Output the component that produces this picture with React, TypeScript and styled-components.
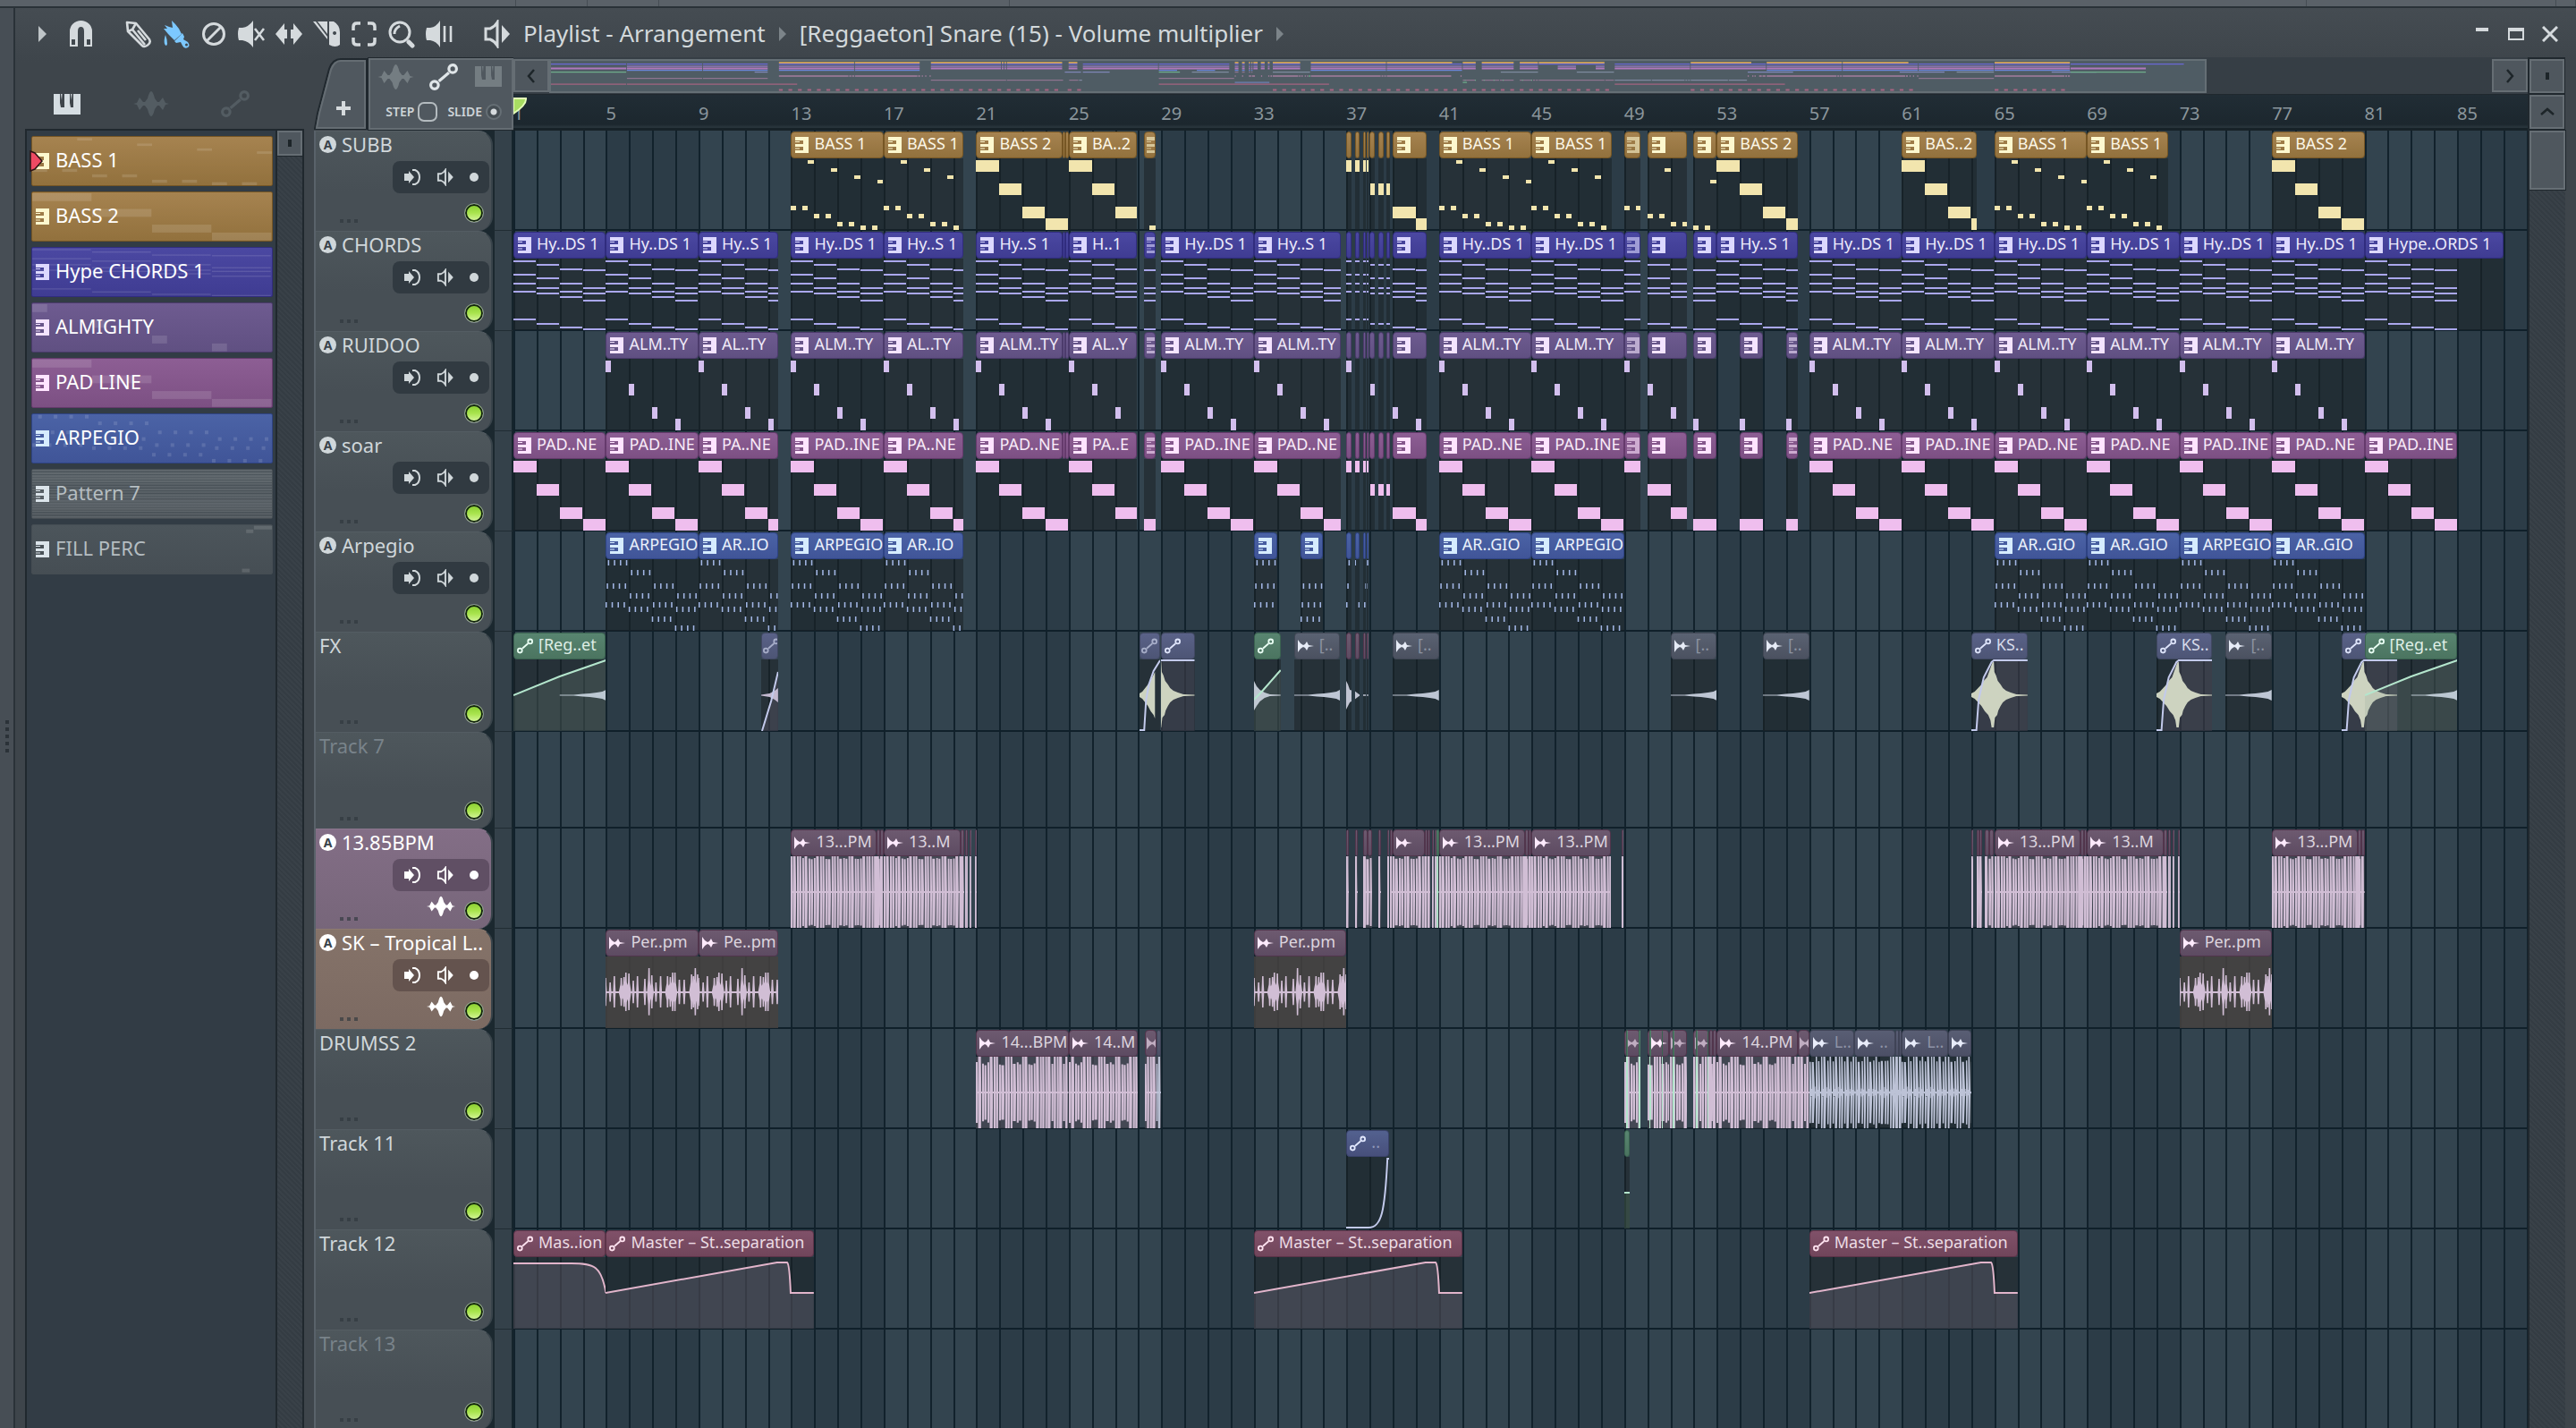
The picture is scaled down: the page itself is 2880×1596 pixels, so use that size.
import React from "react";
import styled, { createGlobalStyle } from "styled-components";

/* ---------- timeline scale ---------- */

const TOTAL_BARS = 87.05;
const pct = (bars: number) => `${(bars / TOTAL_BARS) * 100}%`;

const Global = createGlobalStyle`
  *, *::before, *::after { box-sizing: border-box; }
  html, body { margin: 0; height: 100%; background: #40474d; }
  body { font-family: "Noto Sans", "Open Sans", sans-serif; color: #d3d9dc; overflow: hidden; }
  button { font: inherit; color: inherit; border: 0; padding: 0; margin: 0; background: none; cursor: pointer; }
  input { margin: 0; }
  svg { display: block; }
`;

/* ---------- colours ---------- */

type Tone = { a: string; b: string; edge: string; ink: string; icon: string; note: string };

const tones: Record<string, Tone> = {
  bass: { a: "#a68350", b: "#92713d", edge: "#765624", ink: "#fbf6e6", icon: "#fdf8cf", note: "#f2e5ae" },
  chords: { a: "#4b48a2", b: "#3f3c92", edge: "#302c7e", ink: "#eceafb", icon: "#dcd8ff", note: "#aaa7ec" },
  almighty: { a: "#6e5b90", b: "#605082", edge: "#4c3b6c", ink: "#f0eaf8", icon: "#f4e4ff", note: "#d3bfee" },
  pad: { a: "#8d5e94", b: "#7c5083", edge: "#653a6c", ink: "#f8ebf8", icon: "#ffe4ff", note: "#efbeee" },
  arp: { a: "#4b63a6", b: "#405598", edge: "#2e4384", ink: "#eaf1fb", icon: "#d6ecff", note: "#a2b6e4" },
  green: { a: "#588570", b: "#4b7460", edge: "#3a6350", ink: "#dfeee6", icon: "#eafff4", note: "#b4e6cd" },
  slate: { a: "#5a6288", b: "#4d5575", edge: "#414862", ink: "#d6daea", icon: "#dfe5fb", note: "#c3caec" },
  grey: { a: "#5a6272", b: "#4b5160", edge: "#414755", ink: "#8b92a0", icon: "#e6ebf6", note: "#bec6d4" },
  mauve: { a: "#6d5a70", b: "#5d4b62", edge: "#51354c", ink: "#ddd5df", icon: "#fdeafc", note: "#d1bed5" },
  steel: { a: "#595e74", b: "#4c5066", edge: "#3f4356", ink: "#8e93a6", icon: "#e8ecfa", note: "#bcc2d6" },
  indigo: { a: "#53618f", b: "#474f7b", edge: "#3a4269", ink: "#8e96b8", icon: "#e3e9ff", note: "#c3caec" },
  wine: { a: "#805169", b: "#71455b", edge: "#5c3348", ink: "#ecdce4", icon: "#ffe3f0", note: "#e2b5cb" },
  plain: { a: "#4c555b", b: "#464e54", edge: "#454d53", ink: "#b7bfc3", icon: "#dbe4ea", note: "#ffffff" },
};

/* ---------- note and wave shapes (100 units a bar, 80 units high) ---------- */

type Box = [number, number, number, number];
const steps = [1.5, 27.5, 53.5, 66.5];

const bass1: Box[] = [
  [75, 2, 25, 4], [175, 11, 25, 4], [275, 19, 25, 4], [375, 24, 25, 4],
  [0, 53, 25, 5], [50, 53, 25, 5], [100, 62, 25, 5], [150, 62, 25, 5],
  [200, 71, 25, 5], [250, 71, 25, 5], [300, 75, 25, 5], [350, 75, 25, 5],
];
const wide: Box[] = steps.map((y, i) => [i * 100, y, 99, 13]);
const slim: Box[] = steps.map((y, i) => [i * 100, y, 25, 13]);
const chordRows = [
  [2, 17, 27, 36, 67],
  [6, 21, 32, 38, 72],
  [11, 27, 36, 42, 76],
  [12, 32, 38, 46, 78],
];
const chords: Box[] = chordRows.flatMap((ys, i) => ys.map((y): Box => [i * 100, y, 98, 2]));
const arpRows = [
  [1, 27, 48],
  [12, 38, 53],
  [27, 48, 64],
  [38, 53, 74],
];
const arp: Box[] = arpRows.flatMap((ys, i) =>
  ys.flatMap((y, k) => [0, 1, 2, 3].map((n): Box => [i * 100 + n * 26 + (2 - k) * 5, y, 6, 6]))
);

const noteSets: Record<string, Box[]> = { bass1, wide, slim, chords, arp };

const rnd = (n: number) => {
  const v = Math.sin(n * 127.1 + 3.7) * 43758.5453;
  return v - Math.floor(v);
};

const beatPath = (seed: number, ragged: number, weight: number) => {
  const hits: [number, number][] = [[0, 9], [10, 14], [27, 9], [37, 10]];
  let d = "M0 39H400V41H0Z";
  for (let h = 0; h < 8; h += 1) {
    hits.forEach(([x, w], k) => {
      const r = rnd(seed + h * 5 + k);
      const top = r > 0.6 ? ragged * r * 8 : 0;
      const left = h * 50 + x;
      d += `M${left} ${top}H${left + w * weight}L${left + w} 40L${left + w * (weight + 0.05)} ${80 - top}H${left}Z`;
    });
  }
  return d;
};
const loopPath = beatPath(4, 0.4, 0.8);
const drumPath = beatPath(9, 1.2, 0.85);
const steelPath = `${beatPath(31, 0.8, 0.6)}${Array.from({ length: 16 }, (_, i) => {
  const x = i * 25;
  const a = 3 + rnd(i + 60) * 4;
  return `M${x} ${40 - a}L${x + 14} 37L${x + 25} 39V41L${x + 14} 43L${x} ${40 + a}Z`;
}).join("")}`;

const percPeaks: [number, number, number][] = [
  [0, 16, 6], [20, 11, 6], [38, 18, 6], [68, 16, 11], [80, 17, 14], [88, 22, 15], [101, 21, 10], [120, 13, 6], [138, 18, 6],
  [170, 15, 6], [188, 27, 9], [200, 19, 9], [218, 11, 6], [238, 18, 6], [268, 18, 11], [280, 17, 15], [290, 22, 15],
  [300, 22, 10], [319, 14, 6], [340, 14, 6], [372, 20, 11], [380, 18, 11], [388, 27, 10], [398, 20, 8],
];
const percPath =
  "M0 39H400V41H0Z" +
  percPeaks
    .map(([x, a, w]) => `M${x - w} 40L${x - 4} ${40 - a * 0.55}L${x - 3} ${40 - a}H${x + 3}L${x + 4} ${40 - a * 0.5}L${x + w} 40L${x + 4} ${40 + a * 0.5}L${x + 3} ${40 + a * 0.95}H${x - 3}L${x - 4} ${40 + a * 0.5}Z`)
    .join("");

const swellPath =
  "M0 38L6 36L12 32L18 28L22 24L28 20L32 13L36 6L38 3H40L41 14L44 18L47 24L52 28L56 32L62 35L70 37L80 39L100 39.5V40.5L80 41L70 43L62 45L56 48L52 52L48 57L46 62L42 65L40 76H36L34 68L30 62L24 58L18 52L12 48L6 44L0 42Z";

/* ---------- clip data ---------- */

type Shape = "bass1" | "wide" | "slim" | "chords" | "arp" | "loop" | "drum" | "steel" | "perc"
  | "rise" | "riseOver" | "swell" | "swellA" | "swellB" | "tail" | "hit" | "hitLine" | "ramp" | "fall" | "sweep" | "expo" | "dash";

type Clip = { s: number; e: number; tone: string; shape: Shape; label?: string; off?: number };
const clip = (tone: string, shape: Shape) => (s: number, e: number, label?: string, off?: number): Clip => ({ s, e, tone, shape, label, off });

const stutter: [number, number][] = [
  [37, 37.23], [37.38, 37.56], [37.74, 37.85], [37.87, 37.97], [37.98, 38.24], [38.37, 38.61], [38.74, 38.87],
];
const slivers = (mk: ReturnType<typeof clip>, list: [number, number][]) => list.map(([s, e]) => mk(s, e));
const pair = (s: number, e: number): [number, number][] => [[s, (s + e) / 2], [(s + e) / 2, e]];

const b1 = clip("bass", "bass1");
const b2 = clip("bass", "wide");
const ch = clip("chords", "chords");
const al = clip("almighty", "slim");
const pd = clip("pad", "wide");
const ar = clip("arp", "arp");
const lp = clip("mauve", "loop");
const pc = clip("mauve", "perc");
const dr = clip("mauve", "drum");
const st = clip("steel", "steel");
const tl = clip("grey", "tail");
const mst = clip("wine", "ramp");

type TrackInfo = {
  name: string;
  grouped?: boolean;
  wave?: boolean;
  dim?: boolean;
  skin?: "mauve" | "brown";
  short?: boolean;
  clips: Clip[];
};

const tracks: TrackInfo[] = [
  {
    name: "SUBB", grouped: true,
    clips: [
      b1(13, 17, "BASS 1"), b1(17, 20.45, "BASS 1"), b2(21, 24.73, "BASS 2"), ...slivers(b2, pair(24.73, 25)),
      b2(25, 27.95, "BA..2"), b1(28.25, 28.75), ...slivers(b2, stutter), b2(39, 40.48),
      b1(41, 45, "BASS 1"), b1(45, 48.48, "BASS 1"), b1(49, 49.72), b1(50, 51.72), b1(52, 53),
      b2(53, 56.5, "BASS 2"), b2(61, 64.23, "BAS..2"), b1(65, 69, "BASS 1"), b1(69, 72.5, "BASS 1"), b2(77, 81, "BASS 2"),
    ],
  },
  {
    name: "CHORDS", grouped: true,
    clips: [
      ch(1, 5, "Hy..DS 1"), ch(5, 9, "Hy..DS 1"), ch(9, 12.45, "Hy..S 1"), ch(13, 17, "Hy..DS 1"), ch(17, 20.45, "Hy..S 1"),
      ch(21, 24.73, "Hy..S 1"), ...slivers(ch, pair(24.73, 25)), ch(25, 27.95, "H..1"), ch(28.25, 28.75),
      ch(29, 33, "Hy..DS 1"), ch(33, 36.75, "Hy..S 1"), ...slivers(ch, stutter), ch(39, 40.48),
      ch(41, 45, "Hy..DS 1"), ch(45, 49, "Hy..DS 1"), ch(49, 49.72), ch(50, 51.72), ch(52, 53), ch(53, 56.5, "Hy..S 1"),
      ch(57, 61, "Hy..DS 1"), ch(61, 65, "Hy..DS 1"), ch(65, 69, "Hy..DS 1"), ch(69, 73, "Hy..DS 1"),
      ch(73, 77, "Hy..DS 1"), ch(77, 81, "Hy..DS 1"), ch(81, 87, "Hype..ORDS 1"),
    ],
  },
  {
    name: "RUIDOO", grouped: true,
    clips: [
      al(5, 9, "ALM..TY"), al(9, 12.45, "AL..TY"), al(13, 17, "ALM..TY"), al(17, 20.45, "AL..TY"),
      al(21, 24.73, "ALM..TY"), ...slivers(al, pair(24.73, 25)), al(25, 27.95, "AL..Y"), al(28.25, 28.75),
      al(29, 33, "ALM..TY"), al(33, 36.75, "ALM..TY"), ...slivers(al, stutter), al(39, 40.48),
      al(41, 45, "ALM..TY"), al(45, 49, "ALM..TY"), al(49, 49.72), al(50, 51.72), al(52, 53), al(54, 55, undefined, 3), al(56, 56.5),
      al(57, 61, "ALM..TY"), al(61, 65, "ALM..TY"), al(65, 69, "ALM..TY"), al(69, 73, "ALM..TY"), al(73, 77, "ALM..TY"), al(77, 81, "ALM..TY"),
    ],
  },
  {
    name: "soar", grouped: true,
    clips: [
      pd(1, 5, "PAD..NE"), pd(5, 9, "PAD..INE"), pd(9, 12.45, "PA..NE"), pd(13, 17, "PAD..INE"), pd(17, 20.45, "PA..NE"),
      pd(21, 24.73, "PAD..NE"), ...slivers(pd, pair(24.73, 25)), pd(25, 27.95, "PA..E"), pd(28.25, 28.75),
      pd(29, 33, "PAD..INE"), pd(33, 36.75, "PAD..NE"), ...slivers(pd, stutter), pd(39, 40.48),
      pd(41, 45, "PAD..NE"), pd(45, 49, "PAD..INE"), pd(49, 49.72), pd(50, 51.72), pd(52, 53), pd(54, 55, undefined, 3), pd(56, 56.5),
      pd(57, 61, "PAD..NE"), pd(61, 65, "PAD..INE"), pd(65, 69, "PAD..NE"), pd(69, 73, "PAD..NE"),
      pd(73, 77, "PAD..INE"), pd(77, 81, "PAD..NE"), pd(81, 85, "PAD..INE"),
    ],
  },
  {
    name: "Arpegio", grouped: true,
    clips: [
      ar(5, 9, "ARPEGIO"), ar(9, 12.45, "AR..IO"), ar(13, 17, "ARPEGIO"), ar(17, 20.45, "AR..IO"),
      ar(33, 34), ar(35, 36), ...slivers(ar, stutter.slice(0, 4)),
      ar(41, 45, "AR..GIO"), ar(45, 49, "ARPEGIO"),
      ar(65, 69, "AR..GIO"), ar(69, 73, "AR..GIO"), ar(73, 77, "ARPEGIO"), ar(77, 81, "AR..GIO"),
    ],
  },
  {
    name: "FX",
    clips: [
      clip("green", "rise")(1, 5, "[Reg..et"), clip("slate", "sweep")(11.72, 12.45),
      clip("slate", "swellA")(28.05, 28.94), clip("slate", "swellB")(29, 30.45),
      clip("green", "hitLine")(33, 34.15), tl(34.74, 36.72, "[.."),
      ...slivers(clip("mauve", "hit"), stutter.slice(0, 4)),
      tl(39, 41, "[.."), tl(51, 53, "[.."), tl(55, 57, "[.."),
      clip("slate", "swell")(64, 66.43, "KS.."), clip("slate", "swell")(72, 74.4, "KS.."), tl(75, 77, "[.."),
      clip("slate", "swell")(80, 82.4), clip("green", "riseOver")(81, 85, "[Reg..et"),
    ],
  },
  { name: "Track 7", dim: true, short: true, clips: [] },
  {
    name: "13.85BPM", grouped: true, wave: true, skin: "mauve",
    clips: [
      lp(13, 16.7, "13...PM"), ...slivers(lp, pair(16.7, 17)), lp(17, 20.33, "13..M"),
      ...slivers(lp, [[20.33, 20.47], [20.52, 20.62], [20.7, 20.8], [20.93, 21.03]]),
      ...slivers(lp, [[37, 37.09], [37.38, 37.48], [37.74, 37.9], [37.9, 38.1], [38.38, 38.48], [38.76, 38.86], [38.88, 39]]),
      lp(39, 40.38), ...slivers(lp, [[40.38, 40.5], [40.5, 40.62], [40.68, 40.78]]), lp(40.8, 40.9), clip("green", "loop")(40.9, 41),
      lp(41, 44.72, "13...PM"), ...slivers(lp, pair(44.72, 45)), lp(45, 48.43, "13..PM"), lp(48.88, 48.98),
      ...slivers(lp, [[64, 64.1], [64.24, 64.34], [64.36, 64.46], [64.6, 64.78], [64.78, 64.98]]),
      lp(65, 68.72, "13...PM"), ...slivers(lp, pair(68.72, 69)), lp(69, 72.33, "13..M"),
      ...slivers(lp, [[72.33, 72.47], [72.52, 72.62], [72.7, 72.8], [72.92, 73.02]]),
      lp(77, 80.72, "13...PM"), ...slivers(lp, pair(80.72, 81)),
    ],
  },
  {
    name: "SK – Tropical L..", grouped: true, wave: true, skin: "brown",
    clips: [pc(5, 9, "Per..pm"), pc(9, 12.45, "Pe..pm"), pc(33, 37, "Per..pm"), pc(73, 77, "Per..pm")],
  },
  {
    name: "DRUMSS 2",
    clips: [
      dr(21, 25, "14...BPM"), dr(25, 28, "14..M"), dr(28.28, 28.8), clip("steel", "drum")(28.8, 29),
      dr(49, 49.72), dr(50, 50.96), dr(50.96, 51.72), dr(52, 52.7), ...slivers(dr, pair(52.7, 53)),
      ...slivers(clip("green", "drum"), [[49.1, 49.16], [49.64, 49.7], [50.1, 50.16], [50.62, 50.68], [51.1, 51.16], [52.12, 52.18], [52.6, 52.66]]),
      dr(53, 56.5, "14..PM"), dr(56.5, 57), st(57, 58.95, "L.."), st(58.95, 60.72, ".."), ...slivers(st, pair(60.72, 61)),
      st(61, 63, "L.."), st(63, 64),
    ],
  },
  { name: "Track 11", clips: [clip("indigo", "expo")(37, 38.86, ".."), clip("green", "dash")(49, 49.26)] },
  {
    name: "Track 12",
    clips: [
      clip("wine", "fall")(1, 5, "Mas..ion"), mst(5, 14, "Master – St..separation"),
      mst(33, 42, "Master – St..separation"), mst(57, 66, "Master – St..separation"),
    ],
  },
  { name: "Track 13", dim: true, clips: [] },
];

const patterns = [
  { name: "BASS 1", tone: "bass", notes: bass1, active: true },
  { name: "BASS 2", tone: "bass", notes: wide },
  { name: "Hype CHORDS 1", tone: "chords", notes: chords },
  { name: "ALMIGHTY", tone: "almighty", notes: slim },
  { name: "PAD LINE", tone: "pad", notes: wide },
  { name: "ARPEGIO", tone: "arp", notes: arp },
  { name: "Pattern 7", tone: "plain", notes: Array.from({ length: 18 }, (_, i): Box => [0, i * 4.5, 400, 2 + rnd(i) * 2]) },
  { name: "FILL PERC", tone: "plain", notes: [[370, 1, 30, 6], [357, 7, 12, 6], [350, 72, 13, 6]] as Box[] },
];

/* ---------- icons ---------- */

const PianoIcon = () => (
  <svg width="30" height="23" viewBox="0 0 30 23" fill="currentColor" aria-hidden="true">
    <path d="M0 0h7v10l1 5h4V0h6v10l1 5h3V0h8v23H0zM8 0h1.500l-.5 7zM19 0h1.500l-.5 7z" />
  </svg>
);
const WaveIcon = ({ w, h }: { w: number; h: number }) => (
  <svg width={w} height={h} viewBox="0 0 40 28" fill="currentColor" aria-hidden="true">
    <path d="M0 14l4-1 3-6 4 5 2 0 3-4q2-8 4-8t4 8l3 4 2 0 4-5 3 6 4 1-4 1-3 6-4-5-2 0-3 4q-2 8-4 8t-4-8l-3-4-2 0-4 5-3-6z" />
  </svg>
);
const AutoIcon = ({ size }: { size: number }) => (
  <svg width={size} height={size} viewBox="0 0 30 28" fill="none" stroke="currentColor" strokeWidth="3" aria-hidden="true">
    <circle cx="5.500" cy="22.500" r="4" />
    <circle cx="24.500" cy="5.500" r="4" />
    <path d="M10 18.500L20.500 9.500" />
  </svg>
);
const PatternIcon = () => (
  <svg width="16" height="18" viewBox="0 0 16 18" fill="currentColor" aria-hidden="true">
    <path d="M1 0h15v18H1v-3h9v-4H1V8h9V4H1zM1 5h5v1H1zM1 12.500h5v1H1z" />
  </svg>
);
const AudioIcon = () => (
  <svg width="18" height="14" viewBox="0 0 18 14" fill="currentColor" aria-hidden="true">
    <path d="M0 0l3 4 3 2 2-1 2-3 2 4 6 1-6 1-2 4-2-3-2-1-3 2-3 4z" />
  </svg>
);
const SpeakerIcon = ({ w, h }: { w: number; h: number }) => (
  <svg width={w} height={h} viewBox="0 0 30 32" aria-hidden="true">
    <path d="M2 10h5q5-2 8-7v26q-3-5-8-7H2z" fill="none" stroke="currentColor" strokeWidth="3" />
    <path d="M20 6l9 10-9 10z" fill="currentColor" />
  </svg>
);
const InputIcon = () => (
  <svg width="18" height="18" viewBox="0 0 18 18" aria-hidden="true">
    <path d="M0 5h5V2l6 7-6 7v-3H0z" fill="currentColor" />
    <path d="M9 1h3q5 2 5 8t-5 8H9" fill="none" stroke="currentColor" strokeWidth="2" />
  </svg>
);

const toolDrawings: Record<string, React.ReactNode> = {
  Menu: <path d="M10 7l9 9-9 9z" fill="currentColor" opacity=".85" />,
  Snap: (
    <path
      fillRule="evenodd"
      fill="currentColor"
      d="M3 30V13a12.500 12 0 0 1 25 0v17h-9V13q0-5-3.500-5T12 13v17zM5 22v6h4v-6zM22 22v6h4v-6z"
    />
  ),
  Draw: (
    <g fill="none" stroke="currentColor" strokeWidth="2.600" strokeLinejoin="round">
      <path d="M2 3l10 1 15 18q2 4-2 6.500-4 2.500-6 .5L3 13z" />
      <path d="M3 13l5-2 4-7M8 11l14 17M14 12l9 11" />
    </g>
  ),
  Paint: (
    <g>
      <path d="M10 1l4 4 4 5 3 6-8 7-7-7-5-6 4 0-3-4 5 2 4 1z" fill="#7cc8ff" />
      <path d="M22 15l2 4-1 3 5 3q3 4 0 6-4 2-6-2l-2-4-5 1-2-2z" fill="#7cc8ff" />
      <path d="M3 17q2 5 2 10-1 4-3 0Q1 23 3 17z" fill="#7cc8ff" />
      <circle cx="26.500" cy="28" r="1.500" fill="#40474d" />
    </g>
  ),
  Delete: (
    <g fill="none" stroke="currentColor" strokeWidth="3">
      <circle cx="15" cy="16" r="11.500" />
      <path d="M7 24L23 8" />
    </g>
  ),
  Mute: (
    <g>
      <path d="M1 9h4q7-1 12-8v30q-5-7-12-8H1q-2-7 0-14z" fill="currentColor" />
      <path d="M19 10l10 13M29 10L19 23" stroke="currentColor" strokeWidth="2.600" />
    </g>
  ),
  Slip: <path d="M0 16L10 4v7h3v10h-3v7zM30 16L20 4v7h-3v10h3v7z" fill="currentColor" />,
  Slice: (
    <g>
      <path d="M0 2h3l13 17v3zM5 2h11v14z" fill="currentColor" />
      <path fillRule="evenodd" d="M18 2h5q7 4 7 12v14q-5 4-12 0zM24 13a2 2 0 1 0 .1 0z" fill="currentColor" />
    </g>
  ),
  Select: (
    <path
      d="M3 12V8q0-4 4-4h4M19 4h4q4 0 4 4v4M27 20v4q0 4-4 4h-4M11 28H7q-4 0-4-4v-4"
      fill="none"
      stroke="currentColor"
      strokeWidth="3.500"
    />
  ),
  Zoom: (
    <g fill="none" stroke="currentColor">
      <circle cx="13" cy="14" r="11" strokeWidth="3" />
      <path d="M7 16q0-6 6-9" strokeWidth="3" />
      <path d="M23 25l4 4" strokeWidth="5" strokeLinecap="round" />
    </g>
  ),
  Playback: (
    <g>
      <path d="M1 9h4q7-1 11-8v30q-4-7-11-8H1q-2-7 0-14z" fill="currentColor" />
      <path d="M21 7v18M28 7v18" stroke="currentColor" strokeWidth="2.600" />
    </g>
  ),
};

/* ---------- shell ---------- */

const Shell = styled.div`
  display: flex;
  flex-direction: column;
  height: 100vh;
  overflow: hidden;
  background: #40474d;
`;
const TopStrip = styled.div`
  flex: none;
  display: grid;
  grid-template-columns: 577fr 80fr 80fr 392fr 1450fr 279fr 22fr;
  height: 9px;
  background: #5a6168;
  border-bottom: 2px solid #2a3238;
  & > i { border-right: 1px solid #454c53; }
`;
const Frame = styled.div`
  flex: 1;
  display: flex;
  min-height: 0;
`;
const LeftGrip = styled.div`
  flex: none;
  width: 17px;
  display: flex;
  flex-direction: column;
  align-items: center;
  justify-content: center;
  gap: 4px;
  padding-top: 40px;
  background: #474e55;
  border-right: 2px solid #2a3238;
  & > i { width: 4px; height: 4px; background: #2b3238; }
`;
const WindowBox = styled.div`
  flex: 1;
  min-width: 0;
  display: flex;
  flex-direction: column;
  padding: 0 12px 0 11px;
  background: linear-gradient(#454c52, #3e454b 60px);
`;
const TitleBar = styled.header`
  flex: none;
  height: 55px;
  display: flex;
  align-items: center;
  padding-top: 2px;
  margin: 0 -2px 0 -1px;
`;
const ToolGroup = styled.div`
  display: flex;
  margin-right: 23px;
`;
const ToolButton = styled.button`
  width: 42px;
  height: 42px;
  display: flex;
  align-items: center;
  justify-content: center;
  color: #d5dadd;
`;
const Crumbs = styled.h1`
  margin: 0 0 0 8px;
  display: flex;
  align-items: center;
  gap: 15px;
  flex: 1;
  font-size: 26px;
  line-height: 36px;
  font-weight: 400;
  color: #d3d9dc;
  white-space: nowrap;
  & > span { padding-bottom: 2px; }
  & > i { border-left: 8px solid #7c8489; border-top: 8px solid transparent; border-bottom: 8px solid transparent; }
`;
const WinButton = styled.button`
  width: 38px;
  height: 38px;
  display: flex;
  align-items: center;
  justify-content: center;
  color: #d5dadd;
`;
const Main = styled.div`
  flex: 1;
  min-height: 0;
  display: flex;
  gap: 11px;
`;

/* ---------- picker ---------- */

const Picker = styled.aside`
  flex: none;
  width: 312px;
  display: flex;
  flex-direction: column;
`;
const PickerTabs = styled.div`
  flex: none;
  height: 80px;
  display: grid;
  grid-template-columns: repeat(3, 94px);
  padding-top: 24px;
`;
const PickerTab = styled.button<{ $on?: boolean }>`
  display: flex;
  align-items: center;
  justify-content: center;
  color: ${(p) => (p.$on ? "#d5dde2" : "#535c62")};
`;
const PickerBody = styled.div`
  flex: 1;
  min-height: 0;
  display: flex;
  border: 2px solid #20282e;
  border-width: 2px 2px 0 2px;
`;
const PatternList = styled.div`
  flex: 1;
  display: flex;
  flex-direction: column;
  gap: 6px;
  padding: 6px 3px 0 5px;
  background: #323c45;
`;
const PatternItem = styled.button<{ $tone: Tone; $muted: boolean }>`
  position: relative;
  display: flex;
  align-items: center;
  gap: 6px;
  height: 56px;
  padding-left: 3px;
  border: 1px solid ${(p) => p.$tone.edge};
  border-radius: 2px;
  background: linear-gradient(${(p) => p.$tone.a}, ${(p) => p.$tone.b});
  font-size: 22px;
  line-height: 30px;
  color: ${(p) => (p.$muted ? "#b5bdc1" : "#ffffff")};
  white-space: nowrap;
`;
const PatternLabel = styled.span<{ $tone: Tone }>`
  position: relative;
  display: flex;
  align-items: center;
  gap: 7px;
  & > svg { color: ${(p) => p.$tone.icon}; }
  & > span { padding-bottom: 4px; }
`;
const PatternNotes = styled.svg`
  position: absolute;
  inset: 0;
  width: 100%;
  height: 100%;
  fill: #ffffff;
  opacity: 0.12;
`;
const PlayingMark = styled.svg`
  position: absolute;
  left: -3px;
  top: 15px;
  color: #ee4a63;
`;
const ScrollRail = styled.div<{ $w: number }>`
  flex: none;
  width: ${(p) => p.$w}px;
  display: flex;
  flex-direction: column;
  border-left: 2px solid #20282e;
  background: repeating-linear-gradient(45deg, #394148 0 2px, #343c43 2px 4px);
`;
const RailButton = styled.button<{ $h: number }>`
  flex: none;
  height: ${(p) => p.$h}px;
  display: flex;
  align-items: center;
  justify-content: center;
  background: #4f575e;
  border: 2px solid #666e74;
  color: #1d2529;
  outline: 1px solid #20282e;
  & > i { width: 4px; height: 8px; background: #1d2529; }
`;

/* ---------- arrangement ---------- */

const Arrangement = styled.section`
  flex: 1;
  min-width: 0;
  display: flex;
  flex-direction: column;
`;
const TopArea = styled.div`
  flex: none;
  height: 82px;
  display: grid;
  grid-template-columns: 223px 1fr 42px;
`;
const HeaderTabs = styled.div`
  display: grid;
  grid-template-columns: 60px 1fr;
  gap: 1px;
  padding-top: 1px;
`;
const AddTab = styled.button`
  position: relative;
  height: 80px;
  display: flex;
  align-items: center;
  justify-content: center;
  padding: 32px 0 0 6px;
  color: #d5dadd;
  & > svg:first-child { position: absolute; inset: 0; }
  & > svg:last-child { position: relative; }
`;
const ModeTab = styled.div`
  height: 80px;
  display: grid;
  grid-template-rows: 37px 1fr;
  background: #50585f;
  border: 2px solid #656d73;
  outline: 1px solid #20282e;
`;
const ModeIcons = styled.div`
  display: grid;
  grid-template-columns: 56px 52px 48px;
  & > button { display: flex; align-items: center; justify-content: center; color: #747d82; }
  & > button:nth-child(2) { color: #e0e6e9; }
`;
const ModeOptions = styled.div`
  display: flex;
  align-items: center;
  justify-content: flex-end;
  gap: 11px;
  padding: 3px 11px 0 0;
  font-size: 14px;
  line-height: 20px;
  font-weight: 600;
  color: #ced4d7;
  & > label { display: flex; align-items: center; gap: 4px; }
`;
const StepBox = styled.input`
  appearance: none;
  width: 22px;
  height: 22px;
  border: 2px solid #b4bbbf;
  border-radius: 7px;
`;
const SlideDot = styled.input`
  appearance: none;
  width: 18px;
  height: 18px;
  border: 2px solid #666f75;
  border-radius: 50%;
  background: radial-gradient(circle, #d5dadd 0 3px, #454d53 4px);
`;
const TimeHead = styled.div`
  min-width: 0;
  display: flex;
  flex-direction: column;
`;
const MiniRow = styled.div`
  height: 42px;
  display: flex;
  padding: 2px 0;
  background: #363e45;
  border-bottom: 1px solid #20282e;
`;
const MiniButton = styled.button`
  flex: none;
  width: 40px;
  display: flex;
  align-items: center;
  justify-content: center;
  background: #4f575e;
  border: 2px solid #666e74;
  color: #1d2529;
`;
const MiniTrack = styled.div`
  flex: 1;
  display: flex;
`;
const MiniView = styled.svg`
  width: 85.300%;
  height: 38px;
  background: #4f5c64;
  border: 2px solid #656f75;
`;
const Ruler = styled.div`
  position: relative;
  height: 40px;
  background: linear-gradient(#212d35, #1c272e 33px, #28343b 36px);
  border-bottom: 3px solid #172228;
  font-size: 20px;
  line-height: 38px;
  color: #8b969c;
  overflow: hidden;
`;
const RulerMark = styled.span`
  position: absolute;
  top: 2px;
`;
const PlayHead = styled.svg`
  position: absolute;
  left: 0;
  top: 3px;
`;
const CornerButtons = styled.div`
  display: flex;
  flex-direction: column;
  gap: 2px;
  padding: 2px 1px 2px 2px;
  background: #20282e;
`;
const Body = styled.div`
  flex: 1;
  min-height: 0;
  display: flex;
`;
const TrackList = styled.div`
  flex: 1;
  min-width: 0;
  display: flex;
  flex-direction: column;
  overflow: hidden;
  border-left: 2px solid #59626a;
`;
const TrackRow = styled.div<{ $short?: boolean }>`
  flex: none;
  display: flex;
  height: ${(p) => (p.$short ? 108 : 112)}px;
  background: #1b282f;
`;

const skins = {
  none: { bg: "linear-gradient(#4e575c, #474f55 60%)", box: "#313a41", ink: "#d0d7da", edge: "#545d63" },
  mauve: { bg: "linear-gradient(#836e86, #77667a)", box: "#604f64", ink: "#ffffff", edge: "#8b768e" },
  brown: { bg: "linear-gradient(#857369, #7c6a62)", box: "#64534e", ink: "#ffffff", edge: "#8d7a70" },
};
type Skin = (typeof skins)["none"];

const TrackHead = styled.div<{ $skin: Skin; $dim?: boolean }>`
  flex: none;
  width: 198px;
  display: grid;
  grid-template-rows: 33px 36px 1fr;
  padding-right: 2px;
  border-top: 1px solid ${(p) => p.$skin.edge};
  border-right: 2px solid #38434a;
  border-radius: 0 16px 16px 0;
  background: ${(p) => p.$skin.bg};
  color: ${(p) => (p.$dim ? "#79838a" : p.$skin.ink)};
`;
const TrackName = styled.div`
  display: flex;
  align-items: center;
  gap: 6px;
  padding: 0 0 5px 4px;
  font-size: 22px;
  line-height: 28px;
  white-space: nowrap;
  overflow: hidden;
`;
const GroupBadge = styled.span`
  flex: none;
  width: 19px;
  height: 19px;
  border-radius: 50%;
  background: currentColor;
  display: flex;
  align-items: center;
  justify-content: center;
  & > b { font-size: 14px; line-height: 19px; color: #39424a; }
`;
const Controls = styled.div<{ $skin: Skin }>`
  justify-self: end;
  width: 108px;
  display: grid;
  grid-template-columns: 38px 36px 28px;
  padding-left: 3px;
  border-radius: 8px;
  background: ${(p) => p.$skin.box};
  & > button { display: flex; align-items: center; justify-content: center; }
  & > button > i { width: 10px; height: 10px; border-radius: 50%; background: currentColor; }
`;
const HeadFoot = styled.div`
  grid-row: 3;
  display: flex;
  align-items: flex-end;
  padding: 0 6px 9px 27px;
  gap: 10px;
`;
const MoreDots = styled.button`
  display: flex;
  gap: 4px;
  margin-right: auto;
  & > i { width: 4px; height: 4px; background: #2f373d; opacity: 0.65; }
`;
const WaveSlot = styled.span`
  align-self: center;
`;
const Led = styled.input`
  appearance: none;
  width: 22px;
  height: 22px;
  border-radius: 50%;
  border: 1px solid #8b9597;
  box-shadow: inset 0 0 0 2px #12240f;
  background: linear-gradient(#85cc2d, #a9e44e 50%, #dcf8a6);
`;
const Gutter = styled.div`
  flex: none;
  width: 23px;
  border-left: 2px solid #1b282f;
  border-right: 2px solid #15242c;
  border-bottom: 1px solid #202c33;
  background: #34414a;
`;
const Lane = styled.div`
  flex: 1;
  position: relative;
  min-width: 0;
  overflow: hidden;
  background:
    linear-gradient(#10202a, #10202a) 0 100% / 100% 2px no-repeat,
    repeating-linear-gradient(90deg, #12222c 0 2px, transparent 2px ${pct(1)}),
    repeating-linear-gradient(90deg, #33444f 0 ${pct(4)}, #2c3c47 ${pct(4)} ${pct(8)});
`;
const ClipBox = styled.div`
  position: absolute;
  top: 1px;
  bottom: 1px;
  display: flex;
  flex-direction: column;
  overflow: hidden;
`;
const ClipHead = styled.div<{ $tone: Tone; $thin: boolean }>`
  flex: none;
  height: 30px;
  display: flex;
  align-items: center;
  gap: 6px;
  padding: 0 0 0 ${(p) => (p.$thin ? 1 : 3)}px;
  border: 1px solid ${(p) => p.$tone.edge};
  border-radius: 4px;
  background: linear-gradient(${(p) => p.$tone.a}, ${(p) => p.$tone.b});
  font-size: 18px;
  line-height: 24px;
  color: ${(p) => p.$tone.ink};
  white-space: nowrap;
  overflow: hidden;
  & > svg { flex: none; color: ${(p) => p.$tone.icon}; opacity: ${(p) => (p.$thin ? 0.6 : 1)}; }
  & > span { padding-bottom: 4px; }
`;
const bodyFill: Record<string, string> = {
  perc: "rgba(70, 66, 64, 0.86)",
  riseOver: "none",
};
const ClipArt = styled.svg<{ $shape: string }>`
  flex: 1;
  min-height: 0;
  width: 100%;
  background: ${(p) => bodyFill[p.$shape] ?? "rgba(28, 34, 39, 0.55)"};
`;

/* ---------- clip drawing ---------- */

const Line = ({ d, color, w = 2 }: { d: string; color: string; w?: number }) => (
  <path d={d} fill="none" stroke={color} strokeWidth={w} vectorEffect="non-scaling-stroke" />
);

const tailPath = "M0 39.500H30L50 38.500L65 38L80 37L92 36L100 34V46L92 44L80 43L65 42L50 41.500L30 40.500H0Z";

function clipArt(c: Clip): { box: string; art: React.ReactNode } {
  const tone = tones[c.tone];
  const len = (c.e - c.s) * 100;
  const off = (c.off ?? (c.s - 1) % 4) * 100;
  const full = "0 0 100 80";
  const notes = noteSets[c.shape];
  if (notes) {
    return {
      box: `${off} 0 ${len} 80`,
      art: (
        <g fill={tone.note} shapeRendering={c.shape === "arp" ? "auto" : "crispEdges"}>
          {notes.map(([x, y, w, h], i) => <rect key={i} x={x} y={y} width={w} height={h} />)}
        </g>
      ),
    };
  }
  const swellArt = (
    <>
      <path d="M40 1H100V80H9L13 45L22 20Z" fill="rgba(150,130,160,.18)" />
      <path d={swellPath} fill="#cdd3c0" />
      <Line d="M0 79H9L13 45L22 20L36 3L40 1H100" color={tone.note} />
    </>
  );
  switch (c.shape) {
    case "loop":
    case "drum":
    case "steel":
      return {
        box: `${off} 0 ${len} 80`,
        art: (
          <>
            {c.shape !== "steel" && <rect width="400" height="80" fill="#8b7d96" opacity=".3" />}
            {len < 18 && <rect x={off} width={len * 0.7} height="80" fill={tone.note} />}
            <path d={c.shape === "loop" ? loopPath : c.shape === "drum" ? drumPath : steelPath} fill={tone.note} />
          </>
        ),
      };
    case "perc":
      return { box: `${off} 0 ${len} 80`, art: <path d={percPath} fill={tone.note} /> };
    case "rise":
    case "riseOver":
      return {
        box: full,
        art: (
          <>
            {c.shape === "riseOver" && <rect x="35" width="65" height="80" fill="rgba(28,34,39,.55)" />}
            <path d="M0 40L50 19L100 1V80H0Z" fill="rgba(140,165,150,.2)" />
            <path d={tailPath} transform="translate(50 0) scale(.5 1)" fill="#bcc8d2" />
            <Line d="M0 40L50 19L100 1" color={tone.note} />
          </>
        ),
      };
    case "swell":
      return { box: full, art: swellArt };
    case "swellA":
      return {
        box: "0 0 44 80",
        art: (
          <>
            <path d="M0 38L6 36L12 32L18 28L24 23L30 17L33 14V66L30 62L24 58L18 52L12 48L6 44L0 42Z" fill="#cdd3c0" />
            <Line d="M0 79H10L14 45L20 28L30 13L44 1" color={tone.note} />
          </>
        ),
      };
    case "swellB":
      return { box: "39.5 0 60.5 80", art: swellArt };
    case "tail":
      return { box: full, art: <path d={tailPath} fill={tone.note} /> };
    case "hit":
      return {
        box: `${(c.s - 37) * 100} 0 ${len} 80`,
        art: <path d="M0 24L8 28L16 34L40 36L55 39L100 39.500V40.500L55 41L40 44L16 48L8 52L0 56Z" fill="#c0c4d2" />,
      };
    case "hitLine":
      return {
        box: full,
        art: (
          <>
            <path d="M0 44L100 12V80H0Z" fill="rgba(140,165,150,.2)" />
            <path d="M0 24L10 30L22 34L40 37L60 39L100 39.500V40.500L60 41L40 43L22 47L10 52L0 57Z" fill="#c0c8d2" />
            <Line d="M0 45L35 34L100 12" color={tone.note} />
          </>
        ),
      };
    case "sweep":
      return {
        box: full,
        art: (
          <>
            <path d="M5 80L100 14V80Z" fill="rgba(150,130,160,.2)" />
            <path d="M0 39.500L50 38L80 35L100 32V48L80 45L50 42L0 40.500Z" fill="#c3b9d0" />
            <Line d="M5 80L60 46L100 14" color={tone.note} />
          </>
        ),
      };
    case "ramp":
      return {
        box: "0 0 900 80",
        art: (
          <>
            <path d="M0 40L741 6H785Q795 8 800 40H900V80H0Z" fill="rgba(130,120,140,.3)" />
            <Line d="M0 40L741 6H785Q795 8 800 40H900" color={tone.note} />
          </>
        ),
      };
    case "fall":
      return {
        box: "0 0 400 80",
        art: (
          <>
            <path d="M0 7H250C350 7 380 10 400 40V80H0Z" fill="rgba(130,120,140,.3)" />
            <Line d="M0 7H250C350 7 380 10 400 40" color={tone.note} />
          </>
        ),
      };
    case "expo":
      return { box: full, art: <Line d="M0 79H52C82 79 90 62 96 2H100" color={tone.note} /> };
    default:
      return {
        box: full,
        art: (
          <>
            <rect y="40" width="100" height="40" fill="rgba(120,170,120,.2)" />
            <Line d="M0 40H100" color={tone.note} />
          </>
        ),
      };
  }
}

const isAudio = (c: Clip) => ["grey", "mauve", "steel"].includes(c.tone);
const isAuto = (c: Clip) => ["green", "slate", "indigo", "wine"].includes(c.tone);

function ClipView({ c }: { c: Clip }) {
  const { box, art } = clipArt(c);
  const len = c.e - c.s;
  return (
    <ClipBox style={{ left: pct(c.s - 1), width: pct(len) }}>
      <ClipHead $tone={tones[c.tone]} $thin={len < 0.9}>
        {len > 0.45 && (isAuto(c) ? <AutoIcon size={18} /> : isAudio(c) ? <AudioIcon /> : <PatternIcon />)}
        {c.label && <span>{c.label}</span>}
      </ClipHead>
      <ClipArt $shape={c.shape} viewBox={box} preserveAspectRatio="none" aria-hidden="true">
        {art}
      </ClipArt>
    </ClipBox>
  );
}

function Track({ t }: { t: TrackInfo }) {
  const skin = skins[t.skin ?? "none"];
  return (
    <TrackRow $short={t.short}>
      <TrackHead $skin={skin} $dim={t.dim}>
        <TrackName>
          {t.grouped && <GroupBadge><b>A</b></GroupBadge>}
          {t.name}
        </TrackName>
        {t.grouped && (
          <Controls $skin={skin}>
            <button aria-label={`${t.name} input`}><InputIcon /></button>
            <button aria-label={`${t.name} monitor`}><SpeakerIcon w={20} h={20} /></button>
            <button aria-label={`${t.name} record`}><i /></button>
          </Controls>
        )}
        <HeadFoot>
          <MoreDots aria-label={`${t.name} options`}><i /><i /><i /></MoreDots>
          {t.wave && <WaveSlot><WaveIcon w={32} h={24} /></WaveSlot>}
          <Led type="checkbox" defaultChecked aria-label={`${t.name} enabled`} />
        </HeadFoot>
      </TrackHead>
      <Gutter />
      <Lane>{t.clips.map((c, i) => <ClipView key={i} c={c} />)}</Lane>
    </TrackRow>
  );
}

/* ---------- overview ---------- */

const miniColor: Record<string, string> = {
  bass: "#c49c5c", chords: "#6a68d8", almighty: "#9a7cc8", pad: "#b078bc", arp: "#6a86d8", green: "#6fb08c",
  slate: "#8088b8", grey: "#7f8ca0", mauve: "#8f7590", steel: "#8088a0", indigo: "#7084b8", wine: "#a86482",
};
const miniY = [1, 3, 5.5, 7.5, 10, 12, 16, 16, 19, 21, 23.5, 25.5];
const dotRanges: [number, number][] = [[13, 27.9], [28.2, 29], [39, 56.8], [61, 73], [77, 81]];

const Overview = () => (
  <MiniView viewBox={`0 0 ${TOTAL_BARS * 10} 34`} preserveAspectRatio="none" role="img" aria-label="Arrangement overview">
    {tracks.map((t, i) =>
      t.clips.map((c, k) => (
        <rect
          key={`${i}-${k}`}
          x={(c.s - 1) * 10}
          width={Math.max((c.e - c.s) * 10 - 0.4, 0.5)}
          y={miniY[i]}
          height={i === 0 || i === 3 || i === 7 ? 2 : 1.2}
          fill={miniColor[c.tone]}
        />
      ))
    )}
    {dotRanges.map(([s, e]) => (
      <path key={s} d={`M${(s - 1) * 10} 32.500H${(e - 1) * 10}`} stroke="#a86482" strokeWidth="2" strokeDasharray="2 3" />
    ))}
  </MiniView>
);

const rulerBars = Array.from({ length: 22 }, (_, i) => 1 + i * 4);

const tools = ["Draw", "Paint", "Delete", "Mute", "Slip", "Slice", "Select", "Zoom", "Playback"];

const Tool = ({ name }: { name: string }) => (
  <ToolButton aria-label={name}>
    <svg width="30" height="32" viewBox="0 0 30 32" aria-hidden="true">{toolDrawings[name]}</svg>
  </ToolButton>
);

const Chevron = ({ d }: { d: string }) => (
  <svg width="18" height="18" viewBox="0 0 18 18" fill="none" stroke="currentColor" strokeWidth="2.500" aria-hidden="true">
    <path d={d} />
  </svg>
);

export default function App() {
  return (
    <Shell>
      <Global />
      <TopStrip><i /><i /><i /><i /><i /><i /><i /></TopStrip>
      <Frame>
        <LeftGrip><i /><i /><i /><i /><i /></LeftGrip>
        <WindowBox>
          <TitleBar>
            <ToolGroup>
              <Tool name="Menu" />
              <Tool name="Snap" />
            </ToolGroup>
            <ToolGroup>{tools.map((n) => <Tool key={n} name={n} />)}</ToolGroup>
            <ToolButton aria-label="Preview"><SpeakerIcon w={30} h={32} /></ToolButton>
            <Crumbs>
              <span>Playlist - Arrangement</span><i />
              <span>[Reggaeton] Snare (15) - Volume multiplier</span><i />
            </Crumbs>
            <WinButton aria-label="Minimize">
              <svg width="14" height="18" viewBox="0 0 14 18"><rect y="2" width="14" height="4" fill="currentColor" /></svg>
            </WinButton>
            <WinButton aria-label="Maximize">
              <svg width="18" height="18" viewBox="0 0 18 18"><path fillRule="evenodd" d="M0 2h18v14H0zM2 6v8h14V6z" fill="currentColor" /></svg>
            </WinButton>
            <WinButton aria-label="Close">
              <svg width="18" height="18" viewBox="0 0 18 18"><path d="M1 1l16 16M17 1L1 17" stroke="currentColor" strokeWidth="3" /></svg>
            </WinButton>
          </TitleBar>
          <Main>
            <Picker>
              <PickerTabs>
                <PickerTab $on aria-label="Patterns"><PianoIcon /></PickerTab>
                <PickerTab aria-label="Audio clips"><WaveIcon w={42} h={28} /></PickerTab>
                <PickerTab aria-label="Automation clips"><AutoIcon size={32} /></PickerTab>
              </PickerTabs>
              <PickerBody>
                <PatternList>
                  {patterns.map((p) => (
                    <PatternItem key={p.name} $tone={tones[p.tone]} $muted={p.tone === "plain"}>
                      <PatternNotes viewBox="0 0 400 80" preserveAspectRatio="none" aria-hidden="true">
                        {p.notes.map(([x, y, w, h], i) => <rect key={i} x={x} y={y} width={w} height={h} />)}
                      </PatternNotes>
                      <PatternLabel $tone={tones[p.tone]}>
                        <PatternIcon />
                        <span>{p.name}</span>
                      </PatternLabel>
                      {p.active && (
                        <PlayingMark width="15" height="24" viewBox="0 0 15 24" aria-hidden="true">
                          <path d="M1 1L6 3L14 12L6 21L1 23Z" fill="currentColor" stroke="#2a1414" strokeWidth="1.500" />
                        </PlayingMark>
                      )}
                    </PatternItem>
                  ))}
                </PatternList>
                <ScrollRail $w={30}>
                  <RailButton $h={28} aria-label="Scroll patterns"><i /></RailButton>
                </ScrollRail>
              </PickerBody>
            </Picker>
            <Arrangement>
              <TopArea>
                <HeaderTabs>
                  <AddTab aria-label="Add arrangement">
                    <svg width="60" height="80" viewBox="0 0 60 80" aria-hidden="true">
                      <path d="M1 79L4 62L17 12Q21 1 30 1H59V79Z" fill="#50585f" stroke="#20282e" strokeWidth="2" />
                      <path d="M3 78L6 62L19 13Q23 3 30 3H57V78Z" fill="none" stroke="#656d73" strokeWidth="2" />
                    </svg>
                    <svg width="16" height="16" viewBox="0 0 16 16" aria-hidden="true">
                      <path d="M6 0h4v6h6v4h-6v6H6v-6H0V6h6z" fill="currentColor" />
                    </svg>
                  </AddTab>
                  <ModeTab>
                    <ModeIcons>
                      <button aria-label="Focus audio"><WaveIcon w={41} h={28} /></button>
                      <button aria-label="Focus automation"><AutoIcon size={32} /></button>
                      <button aria-label="Focus patterns"><PianoIcon /></button>
                    </ModeIcons>
                    <ModeOptions>
                      <label>STEP<StepBox type="checkbox" /></label>
                      <label>SLIDE<SlideDot type="radio" defaultChecked /></label>
                    </ModeOptions>
                  </ModeTab>
                </HeaderTabs>
                <TimeHead>
                  <MiniRow>
                    <MiniButton aria-label="Scroll left"><Chevron d="M12 2L6 9l6 7" /></MiniButton>
                    <MiniTrack><Overview /></MiniTrack>
                    <MiniButton aria-label="Scroll right"><Chevron d="M6 2l6 7-6 7" /></MiniButton>
                  </MiniRow>
                  <Ruler>
                    {rulerBars.map((b) => <RulerMark key={b} style={{ left: pct(b - 1) }}>{b}</RulerMark>)}
                    <PlayHead width="16" height="20" viewBox="0 0 16 20" aria-hidden="true">
                      <path d="M0 1H14Q15 8 0 18Z" fill="#a8dd62" stroke="#e6ffba" strokeWidth="2" />
                    </PlayHead>
                  </Ruler>
                </TimeHead>
                <CornerButtons>
                  <RailButton $h={38} aria-label="Zoom"><i /></RailButton>
                  <RailButton $h={38} aria-label="Scroll up"><Chevron d="M2 12l7-6 7 6" /></RailButton>
                </CornerButtons>
              </TopArea>
              <Body>
                <TrackList>{tracks.map((t) => <Track key={t.name} t={t} />)}</TrackList>
                <ScrollRail $w={42}>
                  <RailButton $h={66} aria-label="Vertical scroll" />
                </ScrollRail>
              </Body>
            </Arrangement>
          </Main>
        </WindowBox>
      </Frame>
    </Shell>
  );
}
